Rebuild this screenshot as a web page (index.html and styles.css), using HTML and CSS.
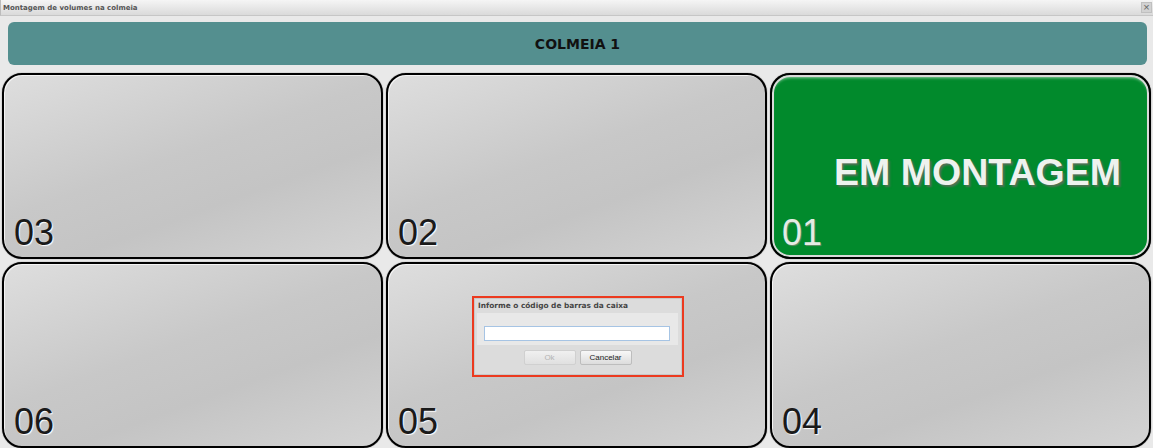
FILE: index.html
```html
<!DOCTYPE html>
<html lang="pt-BR">

<head>
    <meta charset="UTF-8">
    <title>Montagem de volumes na colmeia</title>
    <link rel="stylesheet" href="styles.css">
</head>

<body>
    <!-- barra de titulo da janela -->
    <div class="titlebar">
        <span class="title">Montagem de volumes na colmeia</span>
        <span class="close">&times;</span>
    </div>

    <div class="content">
        <div class="header">COLMEIA 1</div>

        <!-- posicoes da colmeia -->
        <div class="grid">
            <div class="cell"><span class="num">03</span></div>
            <div class="cell"><span class="num">02</span></div>
            <div class="cell busy">
                <span class="status">EM MONTAGEM</span>
                <span class="num">01</span>
            </div>
            <div class="cell"><span class="num">06</span></div>
            <div class="cell"><span class="num">05</span></div>
            <div class="cell"><span class="num">04</span></div>
        </div>
    </div>

    <!-- janela de leitura do codigo de barras -->
    <div class="dialog">
        <div class="dialog-title">Informe o código de barras da caixa</div>
        <div class="dialog-body">
            <input type="text" class="barcode">
        </div>
        <div class="dialog-buttons">
            <button class="btn" disabled>Ok</button>
            <button class="btn">Cancelar</button>
        </div>
    </div>
</body>

</html>
```

FILE: styles.css
```css
* {
    margin: 0;
    padding: 0;
    box-sizing: border-box;
}

html,
body {
    width: 1153px;
    height: 448px;
    overflow: hidden;
}

body {
    background-color: #e9e9e9;
    font-family: "Liberation Sans", Arial, sans-serif;
    position: relative;
}

/* barra de titulo */
.titlebar {
    height: 16px;
    display: flex;
    align-items: center;
    justify-content: space-between;
    padding: 0 1px 0 2px;
    background: linear-gradient(#f5f5f5, #dadada);
    border-bottom: 1px solid #c6c6c6;
    border-left: 1px solid #bcbcbc;
}

.titlebar .title {
    font-family: "DejaVu Sans", sans-serif;
    font-weight: bold;
    font-size: 7px;
    color: #555;
}

.titlebar .close {
    width: 11px;
    height: 11px;
    display: flex;
    align-items: center;
    justify-content: center;
    background-color: #d2d2d2;
    border: 1px solid #c0c0c0;
    color: #666;
    font-size: 11px;
    line-height: 1;
}

.content {
    padding: 6px 2px 0 2px;
}

.header {
    height: 43px;
    margin: 0 4px 8px 6px;
    background-color: #548f8f;
    border-radius: 6px;
    display: flex;
    align-items: center;
    justify-content: center;
    font-family: "DejaVu Sans", sans-serif;
    font-weight: bold;
    font-size: 14px;
    color: #111;
}

/* colmeia 3x2 */
.grid {
    display: grid;
    grid-template-columns: repeat(3, 381px);
    grid-template-rows: 186px 186px;
    gap: 3px;
}

.cell {
    border: 2px solid #000;
    border-radius: 20px;
    background: linear-gradient(160deg, #dedede 0%, #c8c8c8 45%, #c4c4c4 65%, #d4d4d4 100%);
    box-shadow: 0 0 1px #444, inset 1px 1px 0 #f4f4f4;
    display: flex;
    flex-direction: column;
    justify-content: flex-end;
    padding: 0 0 6px 10px;
}

.num {
    font-size: 36px;
    line-height: 1;
    color: #1a1a1a;
    text-shadow: 1px 1px 1px #fff;
}

.cell.busy {
    background: #018a2c;
    box-shadow: 0 0 1px #444, inset 0 0 0 2px #dadada, inset 0 3px 3px rgba(255, 255, 255, 0.55);
    justify-content: space-between;
}

.busy .status {
    margin-top: 79px;
    padding-left: 24px;
    text-align: center;
    font-weight: bold;
    font-size: 37.5px;
    line-height: 1;
    color: #eef2ee;
    text-shadow: 2px 2px 2px rgba(90, 110, 90, 0.9);
}

.busy .num {
    color: #e4ece4;
    text-shadow: 1px 1px 1px #6b8f6b;
}

/* dialogo */
.dialog {
    position: absolute;
    left: 472px;
    top: 296px;
    width: 212px;
    height: 81px;
    border: 2px solid #ec3a1f;
    background-color: #dcdcdc;
    padding: 0 4px 0 3px;
    box-shadow: inset 0 0 0 1px #c8c8c8;
}

.dialog-title {
    height: 15px;
    display: flex;
    align-items: center;
    padding-left: 1px;
    font-family: "DejaVu Sans", sans-serif;
    font-weight: bold;
    font-size: 7.4px;
    color: #444;
}

.dialog-body {
    height: 32px;
    background-color: #e8e8e8;
    padding: 13px 8px 0 7px;
}

.barcode {
    display: block;
    width: 100%;
    height: 15px;
    border: 1px solid #a6c4e4;
    background-color: #fff;
    outline: none;
}

.dialog-buttons {
    display: flex;
    justify-content: center;
    gap: 4px;
    margin-top: 5px;
}

.btn {
    width: 52px;
    height: 15px;
    border: 1px solid #bdbdbd;
    border-radius: 2px;
    background: linear-gradient(#f8f8f8, #dcdcdc);
    font-family: "Liberation Sans", Arial, sans-serif;
    font-size: 8px;
    color: #222;
}

.btn:disabled {
    color: #b4b4b4;
    border-color: #d0d0d0;
    background: linear-gradient(#f0f0f0, #e0e0e0);
}
```
